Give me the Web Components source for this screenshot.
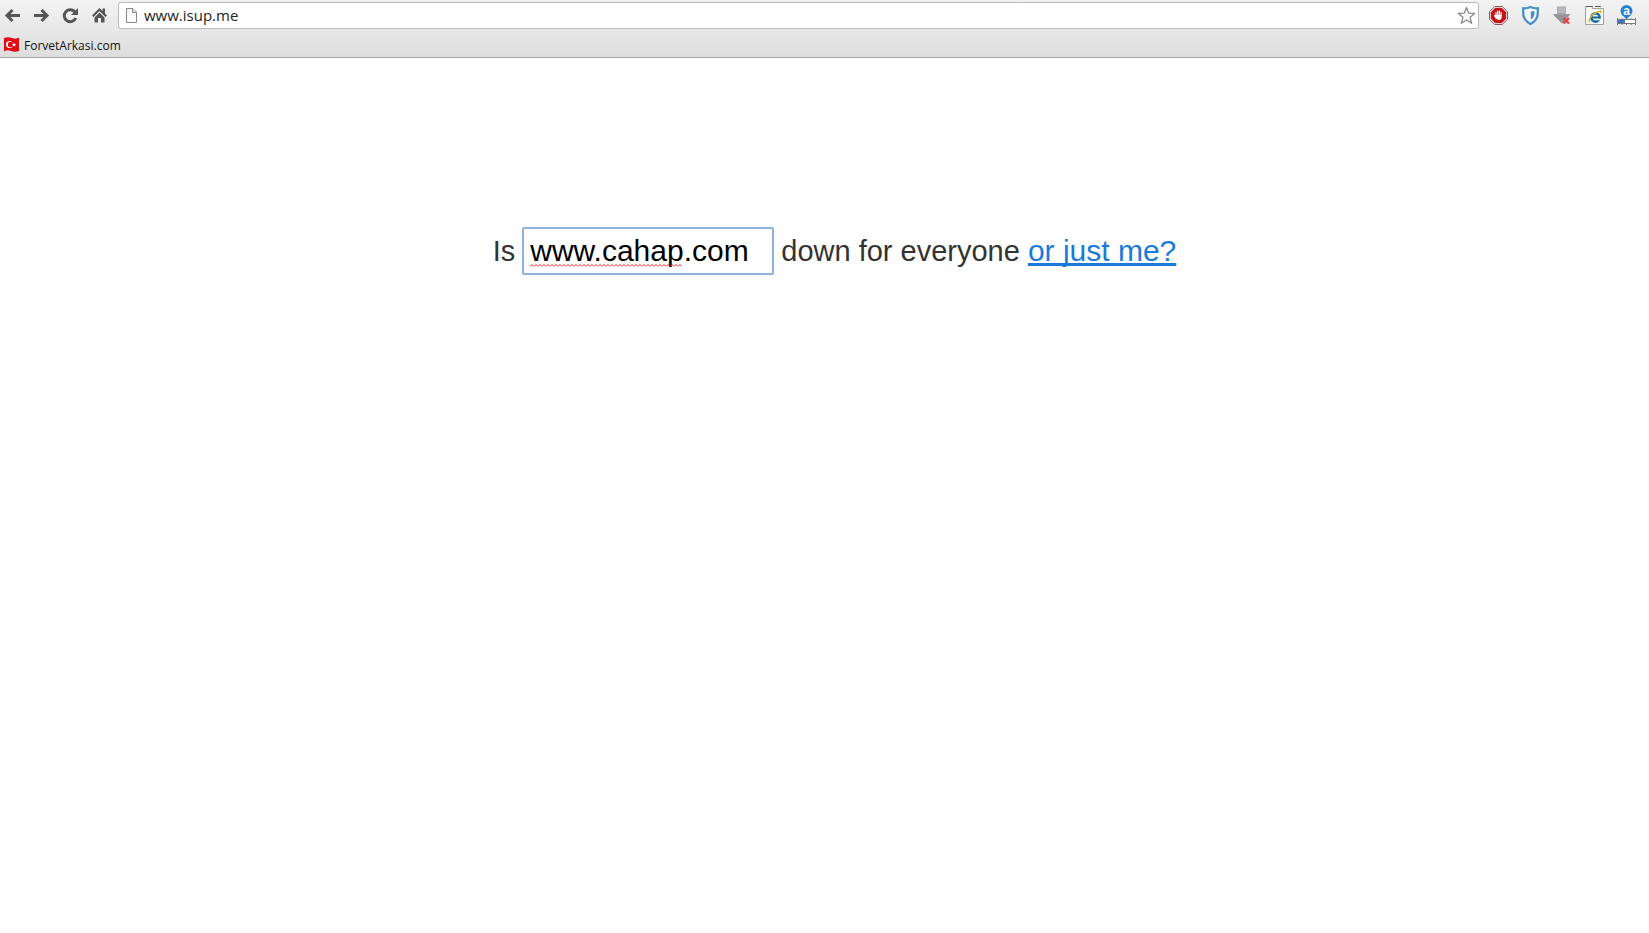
<!DOCTYPE html>
<html lang="en">
<head>
<meta charset="utf-8">
<title>Down for everyone or just me?</title>
<style>
html,body{margin:0;min-height:100%;background:#fefefe}
</style>
</head>
<body>
<browser-toolbar></browser-toolbar>
<bookmarks-bar>
  <bookmark-link href="#forvetarkasi">ForvetArkasi.com</bookmark-link>
</bookmarks-bar>
<site-check domain="www.cahap.com"></site-check>

<script>
const ICONS = {
  back: `<path d="M20 15.500H7M12.500 10L7 15.500L12.500 21" fill="none" stroke="#555" stroke-width="3"/>`,
  forward: `<path d="M5 15.500H18M12.500 10L18 15.500L12.500 21" fill="none" stroke="#555" stroke-width="3"/>`,
  reload: `<path d="M17 12A6 6 0 1 0 17.800 18" fill="none" stroke="#555" stroke-width="3"/><path d="M20 8V15H13Z" fill="#555"/>`,
  home: `<path d="M12.500 8L5 15.500L6.500 17L12.500 11L18.500 17L20 15.500L18 13.500V8.500H15.500V11Z" fill="#555"/><path d="M12.500 12.500L7.500 17.500V22.500H11V18H14V22.500H17.500V17.500Z" fill="#555"/>`,
  page: `<path d="M7.500 8.500H14L17.500 12V22.500H7.500Z" fill="#fafafa" stroke="#8a8a8a"/><path d="M13.500 8.500V12.500H17.500" fill="#ddd" stroke="#8a8a8a"/>`,
  star: `<path d="M12.500 7.500L14.700 13.200L20.700 13.500L16.100 17.300L17.700 23.300L12.500 20L7.300 23.300L8.900 17.300L4.300 13.500L10.300 13.200Z" fill="#fff" stroke="#888" stroke-width="1.300" stroke-linejoin="round"/>`,
  block: `<path d="M8.700 6.500H16.300L21.500 11.700V19.300L16.300 24.500H8.700L3.500 19.300V11.700Z" fill="#fff" stroke="#7c5a5a"/>
    <path d="M9.200 7.800H15.800L20.200 12.200V18.800L15.800 23.200H9.200L4.800 18.800V12.200Z" fill="#c4161a"/>
    <path d="M10 16V12.500M11.700 15V11M13.400 15V11M15.100 16V12.300M8.500 15.500L10 18" stroke="#fff" stroke-width="1.200" stroke-linecap="round"/><path d="M9.500 15H15.700V17.500Q15.500 20 13 20Q11 20 9.500 17.500Z" fill="#fff"/>`,
  shield: `<path d="M5.200 8.300Q9 8.700 12.500 7Q16 8.700 19.800 8.300V13Q19.800 20 12.500 24Q5.200 20 5.200 13Z" fill="#f5f9fc" stroke="#4a90c6" stroke-width="2.300"/><path d="M12.800 11.300Q14.500 11.300 16.500 11V13.500Q16.500 17.500 12.800 19.500Z" fill="#4a90c6"/>`,
  download: `<path d="M7 6.500H16V14H20.500L12 23.500L3 14H7Z" fill="#a7a7a9"/><path d="M8 7.500H15V13H8Z" fill="#b9b9bb"/><path d="M3 14.500H20L12 23.500Z" fill="#959597"/><path d="M13.500 18L19 23.500M19 18L13.500 23.500" stroke="#e23b40" stroke-width="2.200"/>`,
  explorer: `<path d="M3.500 6.500H10.500V8.500H21.500V24.500H3.500Z" fill="#f7f7f5" stroke="#a2a2a2"/><path d="M4 6.500H10.500M13 6.500H19" stroke="#555"/>
    <circle cx="13.500" cy="17.500" r="4.200" fill="#d9edf6" stroke="#17699b" stroke-width="2.400"/><path d="M10 17.500H17.500" stroke="#17699b" stroke-width="2"/><path d="M15 19.500H19" stroke="#f7f7f5" stroke-width="1.400"/><path d="M8.300 22C4.800 22 10 12.200 18.700 11Q19.800 11.300 18.300 13.300" fill="none" stroke="#d7b62f" stroke-width="1.300"/>`,
  tracker: `<circle cx="12.500" cy="11" r="6" fill="#2581d5"/><path d="M9 15.500H16L12.500 19.500Z" fill="#2581d5"/><text x="12.500" y="15" text-anchor="middle" font-family="Liberation Sans,Arial,sans-serif" font-size="12" font-weight="700" fill="#fff">a</text>
    <path d="M3.500 19.500H21.500V23.500H3.500Z" fill="#fff" stroke="#777"/><path d="M4 20H11V23H4Z" fill="#3e74c4"/><path d="M3.500 18V25M8 18.500V19.500M17 18.500V19.500M8 24V25M12.500 24V25M17 24V25M21.500 18V25" stroke="#777"/>`
};

class ToolbarIcon extends HTMLElement {
  constructor() {
    super();
    this.attachShadow({ mode: 'open' });
  }

  connectedCallback() {
    this.shadowRoot.innerHTML = `
      <style>
:host{display:block;flex:none;width:24px;height:30px}
button{display:block;width:24px;height:30px;margin:0;padding:0;border:0;background:none;cursor:pointer}
svg{display:block}
      </style>
      <button type="button" aria-label="${this.getAttribute('label')}">
        <svg width="24" height="30" viewBox="0 0 24 30" aria-hidden="true">${ICONS[this.getAttribute('name')]}</svg>
      </button>
    `;
  }
}

class AddressBar extends HTMLElement {
  constructor() {
    super();
    this.attachShadow({ mode: 'open' });
  }

  connectedCallback() {
    this.shadowRoot.innerHTML = `
      <style>
:host{
  display:flex;
  align-items:center;
  box-sizing:border-box;
  height:27px;
  border:1px solid #b9b9b9;
  border-radius:3px;
  background:#fff;
  overflow:hidden;
}
svg{flex:none;display:block}
input{
  flex:1;
  min-width:0;
  margin:0;
  padding:0;
  border:0;
  outline:0;
  background:none;
  color:#222;
  font:15px/24px "Open Sans","Noto Sans",sans-serif;
}
      </style>
      <svg width="25" height="30" viewBox="0 0 25 30" aria-hidden="true">${ICONS.page}</svg>
      <input type="text" aria-label="Address" value="${this.getAttribute('url')}" spellcheck="false">
      <toolbar-icon name="star" label="Bookmark this page"></toolbar-icon>
    `;
  }
}

class BrowserToolbar extends HTMLElement {
  constructor() {
    super();
    this.attachShadow({ mode: 'open' });
  }

  connectedCallback() {
    this.shadowRoot.innerHTML = `
      <style>
:host{
  display:flex;
  align-items:center;
  gap:7px;
  height:30px;
  padding-right:11px;
  background:linear-gradient(#f3f3f3,#e7e7e7);
}
nav{display:flex;gap:5px}
address-bar{flex:1}
.actions{display:flex;gap:8px}
      </style>
      <nav>
        <toolbar-icon name="back" label="Back"></toolbar-icon>
        <toolbar-icon name="forward" label="Forward"></toolbar-icon>
        <toolbar-icon name="reload" label="Reload"></toolbar-icon>
        <toolbar-icon name="home" label="Home"></toolbar-icon>
      </nav>
      <address-bar url="www.isup.me"></address-bar>
      <div class="actions">
        <toolbar-icon name="block" label="Ad blocker"></toolbar-icon>
        <toolbar-icon name="shield" label="Shield"></toolbar-icon>
        <toolbar-icon name="download" label="Downloads"></toolbar-icon>
        <toolbar-icon name="explorer" label="Open in Explorer"></toolbar-icon>
        <toolbar-icon name="tracker" label="Site rank"></toolbar-icon>
      </div>
    `;
  }
}

class BookmarksBar extends HTMLElement {
  constructor() {
    super();
    this.attachShadow({ mode: 'open' });
    this.shadowRoot.innerHTML = `
      <style>
:host{
  display:flex;
  align-items:center;
  padding:6px 3px 1px;
  background:linear-gradient(#e7e7e7,#dedede);
  border-bottom:1px solid #a6a6a6;
}
      </style>
      <slot></slot>
    `;
  }
}

class BookmarkLink extends HTMLElement {
  constructor() {
    super();
    this.attachShadow({ mode: 'open' });
  }

  connectedCallback() {
    this.shadowRoot.innerHTML = `
      <style>
:host{display:block}
a{
  display:flex;
  align-items:center;
  gap:4px;
  color:#111;
  text-decoration:none;
  font:12px/20px "Open Sans","Noto Sans",sans-serif;
}
svg{display:block}
      </style>
      <a href="${this.getAttribute('href')}">
        <svg width="17" height="20" viewBox="0 0 17 20" aria-hidden="true">
          <path d="M1 2Q5 .500 9 2T16 1.500V15Q12 16.500 8 15T1 15.500Z" fill="#e30a17"/>
          <circle cx="6.500" cy="8.500" r="3.500" fill="#fff"/><circle cx="7.500" cy="8.500" r="2.700" fill="#e30a17"/>
          <path d="M11 6.500L11.600 8L13.200 8.100L12 9.100L12.400 10.600L11 9.800L9.700 10.600L10.100 9.100L8.900 8.100L10.500 8Z" fill="#fff"/>
        </svg>
        <slot></slot>
      </a>
    `;
  }
}

class SiteCheck extends HTMLElement {
  constructor() {
    super();
    this.attachShadow({ mode: 'open' });
  }

  connectedCallback() {
    this.shadowRoot.innerHTML = `
      <style>
:host{
  display:block;
  padding:169px 0 40px 20px;
  color:#333;
  font:29px/36px "Liberation Sans",Arial,sans-serif;
}
form{
  display:flex;
  flex-wrap:wrap;
  align-items:center;
  justify-content:center;
  gap:7px;
}
.field{position:relative}
input{
  display:block;
  box-sizing:border-box;
  width:252px;
  height:48px;
  margin:0;
  padding:0 6px;
  border:2px solid #8fb1e0;
  border-radius:2px;
  outline:0;
  background:#fff;
  color:#000;
  font:inherit;
  font-size:30px;
}
/* spelling mark under the unknown word */
.mark{
  position:absolute;
  left:8px;
  bottom:8px;
  width:152px;
  height:3px;
}
a{font-size:30px;color:#1a7ad9;text-decoration:underline;text-decoration-thickness:3px;text-underline-offset:2px;text-decoration-skip-ink:none}
      </style>
      <form>
        <label for="domain">Is</label>
        <div class="field">
          <input id="domain" type="text" value="${this.getAttribute('domain')}" spellcheck="false">
          <svg class="mark" aria-hidden="true">
            <defs><pattern id="wave" width="4" height="3" patternUnits="userSpaceOnUse"><path d="M0 2.500L2 .500L4 2.500" fill="none" stroke="#e0202a"/></pattern></defs>
            <rect width="100%" height="3" fill="url(#wave)"/>
          </svg>
        </div>
        <span>down for everyone <a href="#check">or just me?</a></span>
      </form>
    `;
  }
}

customElements.define('toolbar-icon', ToolbarIcon);
customElements.define('address-bar', AddressBar);
customElements.define('browser-toolbar', BrowserToolbar);
customElements.define('bookmarks-bar', BookmarksBar);
customElements.define('bookmark-link', BookmarkLink);
customElements.define('site-check', SiteCheck);
</script>
</body>
</html>
